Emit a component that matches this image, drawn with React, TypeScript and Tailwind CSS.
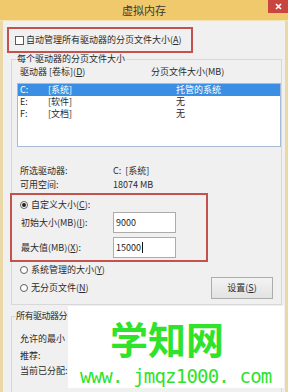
import React from "react";

function Radio({ checked }: { checked?: boolean }) {
  return (
    <span className="flex h-[8px] w-[8px] shrink-0 items-center justify-center rounded-full border border-[#5f5f5f] bg-white">
      {checked && <span className="h-[4px] w-[4px] rounded-full bg-[#222]" />}
    </span>
  );
}

function Key({ k }: { k: string }) {
  return (
    <>
      (<u>{k}</u>)
    </>
  );
}

export default function App() {
  return (
    <div className="relative h-[392px] w-[288px] overflow-hidden bg-[#f0f0f0] font-['Noto_Sans_CJK_SC','Liberation_Sans',sans-serif] text-[9px] leading-[12px] text-[#2b2b2b]">
      {/* title bar */}
      <div className="relative flex h-[21px] items-center justify-center border-b border-[#f3e2b4] bg-[#efc96b] text-[11px] text-[#3a3a3a]">
        虚拟内存
        <div className="absolute right-0 top-0 flex h-[13px] w-[20px] items-center justify-center bg-[#c8463d]">
          <svg width="7" height="7" viewBox="0 0 7 7">
            <path d="M1 1L6 6M6 1L1 6" stroke="#fff" strokeWidth="1.6" />
          </svg>
        </div>
      </div>

      <div className="flex h-[371px]">
        <div className="w-[3px] bg-[#ead8a6]" />
        <div className="flex-1">
          {/* auto manage */}
          <div className="ml-[4px] mt-[6px] flex h-[26px] w-[186px] items-center border-2 border-[#c4514c] pl-[6px]">
            <span className="h-[9px] w-[9px] shrink-0 border border-[#5a5a5a] bg-white" />
            <span className="ml-[2px]">
              自动管理所有驱动器的分页文件大小<Key k="A" />
            </span>
          </div>

          {/* per drive group */}
          <fieldset className="ml-[8px] w-[271px] border border-[#d8d8d8] pb-[5px]">
            <legend className="ml-[4px] px-[1px]">每个驱动器的分页文件大小</legend>
            <div className="mt-[1px] flex h-[12px] pl-[8px]">
              <span className="w-[131px]">
                驱动器 [卷标]<Key k="D" />
              </span>
              <span>分页文件大小(MB)</span>
            </div>
            <div className="ml-[5px] mt-[5px] h-[64px] w-[264px] border border-[#a7bcd4] bg-white">
              <div className="flex h-[12px] bg-[#3a8fe4] pl-[2px] text-white">
                <span className="w-[28px]">C:</span>
                <span className="w-[128px]">[系统]</span>
                <span>托管的系统</span>
              </div>
              <div className="flex h-[12px] pl-[2px]">
                <span className="w-[28px]">E:</span>
                <span className="w-[128px]">[软件]</span>
                <span>无</span>
              </div>
              <div className="flex h-[12px] pl-[2px]">
                <span className="w-[28px]">F:</span>
                <span className="w-[128px]">[文档]</span>
                <span>无</span>
              </div>
            </div>

            <div className="mt-[17px] flex h-[14px] items-center pl-[8px]">
              <span className="w-[93px]">所选驱动器:</span>
              <span>C:&nbsp;&nbsp;[系统]</span>
            </div>
            <div className="flex h-[14px] items-center pl-[8px]">
              <span className="w-[93px]">可用空间:</span>
              <span>18074 MB</span>
            </div>

            {/* custom size */}
            <div className="-ml-[2px] mt-[1px] h-[69px] w-[198px] border-2 border-[#c4514c]">
              <div className="mt-[4px] flex h-[12px] items-center pl-[8px]">
                <Radio checked />
                <span className="ml-[3px]">
                  自定义大小<Key k="C" />:
                </span>
              </div>
              <div className="mt-[1px] flex h-[21px] items-center pl-[9px]">
                <span className="w-[92px]">
                  初始大小(MB)<Key k="I" />:
                </span>
                <div className="flex h-[21px] w-[63px] items-center border border-[#ababab] bg-white pl-[2px] text-[#1e1e1e]">
                  9000
                </div>
              </div>
              <div className="mt-[4px] flex h-[21px] items-center pl-[9px]">
                <span className="w-[92px]">
                  最大值(MB)<Key k="X" />:
                </span>
                <div className="flex h-[21px] w-[63px] items-center border border-[#ababab] bg-white pl-[2px] text-[#1e1e1e]">
                  15000
                  <span className="ml-[1px] h-[11px] w-[1px] bg-[#111]" />
                </div>
              </div>
            </div>

            <div className="mt-[2px] flex h-[12px] items-center pl-[8px]">
              <Radio />
              <span className="ml-[3px]">
                系统管理的大小<Key k="Y" />
              </span>
            </div>
            <div className="mt-[1px] flex h-[22px] items-center pl-[8px] pr-[8px]">
              <Radio />
              <span className="ml-[3px]">
                无分页文件<Key k="N" />
              </span>
              <button className="ml-auto flex h-[22px] w-[62px] items-center justify-center border border-[#acacac] bg-linear-to-b from-[#f3f3f3] to-[#e2e2e2]">
                设置<Key k="S" />
              </button>
            </div>
          </fieldset>

          {/* all drives group: only the part left of the watermark shows */}
          <fieldset className="ml-[8px] mt-[5px] h-[100px] w-[271px] border border-[#d8d8d8]">
            <legend className="ml-[4px] tracking-[-0.5px]">所有驱动器分</legend>
            <div className="mt-[11px] h-[12px] pl-[8px]">允许的最小</div>
            <div className="mt-[5px] h-[12px] pl-[8px]">推荐:</div>
            <div className="mt-[3px] h-[12px] pl-[8px]">当前已分配:</div>
          </fieldset>
        </div>
        <div className="w-[3px] bg-[#ead8a6]" />
      </div>

      {/* watermark */}
      <div className="absolute left-[68px] top-[306px] h-[82px] w-[216px] bg-white">
        <div className="ml-[42px] mt-[13px] text-[38px] font-bold leading-[38px] text-[#2fe22a]">学知网</div>
        <div className="ml-[12px] mt-[10px] whitespace-pre font-['DejaVu_Sans_Mono',monospace] text-[19px] leading-[19px] tracking-[-0.8px] text-[#2fe22a]">
          www. jmqz1000. com
        </div>
      </div>
    </div>
  );
}
